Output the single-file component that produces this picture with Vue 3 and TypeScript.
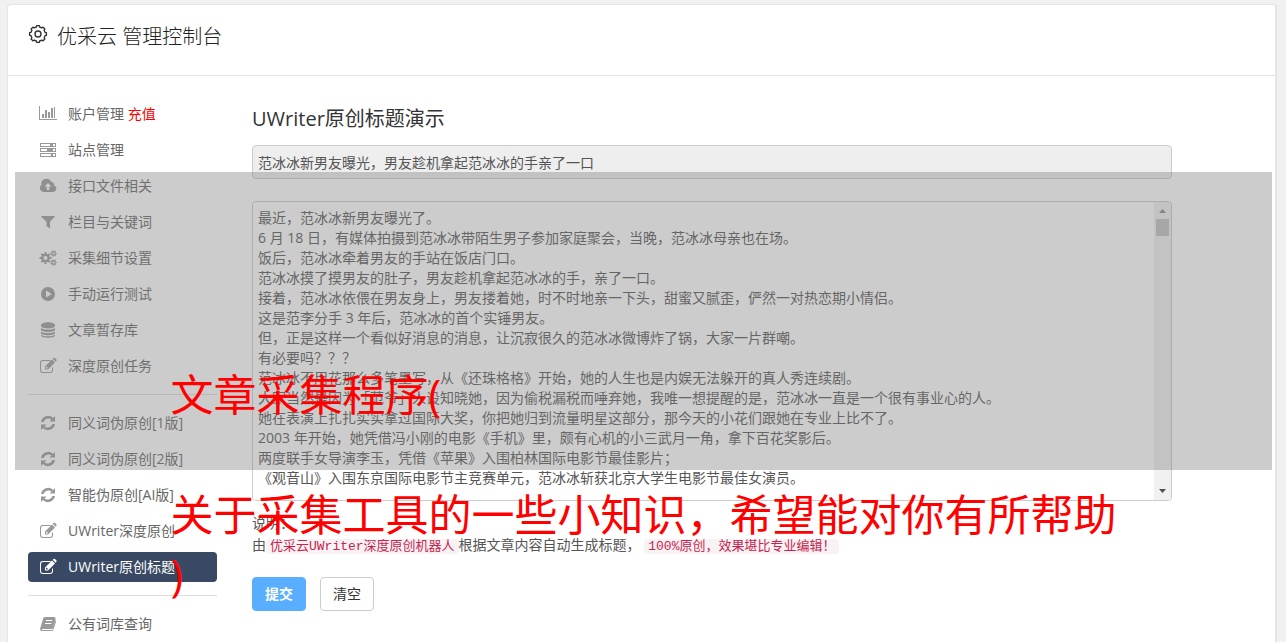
<script setup lang="ts">
import { ref } from 'vue'

interface Item { icon: string; label: string; extra?: string; active?: boolean }

const groups: Item[][] = [
  [
    { icon: 'chart', label: '账户管理', extra: '充值' },
    { icon: 'server', label: '站点管理' },
    { icon: 'cloud', label: '接口文件相关' },
    { icon: 'filter', label: '栏目与关键词' },
    { icon: 'cogs', label: '采集细节设置' },
    { icon: 'play', label: '手动运行测试' },
    { icon: 'database', label: '文章暂存库' },
    { icon: 'edit', label: '深度原创任务' },
  ],
  [
    { icon: 'refresh', label: '同义词伪原创[1版]' },
    { icon: 'refresh', label: '同义词伪原创[2版]' },
    { icon: 'refresh', label: '智能伪原创[AI版]' },
    { icon: 'edit', label: 'UWriter深度原创' },
    { icon: 'edit', label: 'UWriter原创标题', active: true },
  ],
  [{ icon: 'book', label: '公有词库查询' }],
]

const gear = (cx: number, cy: number, outer: number, inner: number, hole: number, teeth: number): string => {
  const points: string[] = []
  const step = (Math.PI * 2) / teeth
  for (let i = 0; i < teeth; i++) {
    const shape: [number, number][] = [[-0.3, inner], [-0.2, outer], [0.2, outer], [0.3, inner]]
    for (const [offset, radius] of shape) {
      const a = (i + offset) * step
      points.push(`${(cx + Math.cos(a) * radius).toFixed(2)} ${(cy + Math.sin(a) * radius).toFixed(2)}`)
    }
  }
  return `M${points.join('L')}ZM${cx - hole} ${cy}a${hole} ${hole} 0 1 0 ${hole * 2} 0a${hole} ${hole} 0 1 0 ${-hole * 2} 0Z`
}

const icons: Record<string, string> = {
  chart: 'M0 1h1v13h17v1H0ZM3 9h2v4H3ZM6 5h2v8H6ZM9 7h2v6H9ZM12 3h2v10h-2ZM15 2h1v11h-1Z',
  server: 'M1 2h16v4H1ZM2 3v2h9V3ZM14 3v2h2V3ZM1 7h16v4H1ZM2 8v2h6V8ZM14 8v2h2V8ZM1 12h16v4H1ZM2 13v2h10v-2ZM14 13v2h2v-2Z',
  cloud: 'M4.5 15A4 4 0 0 1 2.500 7.700A5 5 0 0 1 12 4.800A3 3 0 0 1 15 8.400A3.400 3.400 0 0 1 14.300 15ZM9 6L5.500 9.600h2.300V13h2.400V9.600h2.300Z',
  filter: 'M2.500 3h13q.6.5 0 1.100L11 8.800V15.500L7.500 13V8.800L2.500 4.100q-.6-.6 0-1.100Z',
  cogs: gear(6.5, 9, 6, 4.4, 2, 8) + gear(14.5, 4.5, 3.3, 2.3, 1.1, 7) + gear(14.5, 13.5, 3.3, 2.3, 1.1, 7),
  play: 'M9 2a7 7 0 1 0 0 14a7 7 0 1 0 0-14ZM7 5.500L12.700 9L7 12.500Z',
  database: 'M2 4.200C2 .2 16 .2 16 4.200V5C16 8.200 2 8.200 2 5ZM2 7C5 9 13 9 16 7V8.700C16 11.600 2 11.600 2 8.700ZM2 10.500C5 12.500 13 12.500 16 10.500V12C16 15 2 15 2 12ZM2 13.800C5 15.800 13 15.800 16 13.800V14.600C16 17.600 2 17.600 2 14.600Z',
  edit: 'M3.500 3H12L11 4H4Q2 4 2 6V13Q2 15 4 15H11Q13 15 13 13V11L14 10V13Q14 16 11 16H4Q1 16 1 13V6Q1 3 3.500 3ZM6 9.500L13 2.500L16 5.500L9 12.500H6ZM7 10V11.500H8.500L9 11L7.500 9.500ZM13.700 1.800L14.500 1Q15.200.4 16 1L17.300 2.300Q18 3 17.300 3.900L16.600 4.700Z',
  refresh: 'M2 8A7.200 7.200 0 0 1 14.100 3.900L16 2V7.500H10.500L12.500 5.500A5 5 0 0 0 4.600 8ZM16 10A7.200 7.200 0 0 1 3.900 14.100L2 16V10.500H7.500L5.500 12.500A5 5 0 0 0 13.400 10Z',
  book: 'M6 2H15Q17 2 16.500 4L14 13Q13.500 14 12 14H3.500Q2.500 14 3 15H13.500L16.500 5Q17.500 6 17 7L14.300 15Q14 16 12.500 16H3Q1 16 1 14L4 4Q4.500 2 6 2ZM7 5L6.700 6H13L13.300 5ZM6.200 8L5.900 9H12.200L12.500 8Z',
}

const title = ref('范冰冰新男友曝光，男友趁机拿起范冰冰的手亲了一口')
const article = ref([
  '最近，范冰冰新男友曝光了。',
  '6 月 18 日，有媒体拍摄到范冰冰带陌生男子参加家庭聚会，当晚，范冰冰母亲也在场。',
  '饭后，范冰冰牵着男友的手站在饭店门口。',
  '范冰冰摸了摸男友的肚子，男友趁机拿起范冰冰的手，亲了一口。',
  '接着，范冰冰依偎在男友身上，男友搂着她，时不时地亲一下头，甜蜜又腻歪，俨然一对热恋期小情侣。',
  '这是范李分手 3 年后，范冰冰的首个实锤男友。',
  '但，正是这样一个看似好消息的消息，让沉寂很久的范冰冰微博炸了锅，大家一片群嘲。',
  '有必要吗？？？',
  '范冰冰不用花那么多笔墨写，从《还珠格格》开始，她的人生也是内娱无法躲开的真人秀连续剧。',
  '大家当然是因为「范爷」人设知晓她，因为偷税漏税而唾弃她，我唯一想提醒的是，范冰冰一直是一个很有事业心的人。',
  '她在表演上扎扎实实拿过国际大奖，你把她归到流量明星这部分，那今天的小花们跟她在专业上比不了。',
  '2003 年开始，她凭借冯小刚的电影《手机》里，颇有心机的小三武月一角，拿下百花奖影后。',
  '两度联手女导演李玉，凭借《苹果》入围柏林国际电影节最佳影片；',
  '《观音山》入围东京国际电影节主竞赛单元，范冰冰斩获北京大学生电影节最佳女演员。',
].join('\n'))

const clearForm = () => {
  title.value = ''
  article.value = ''
}
</script>

<template>
  <div class="page">
    <div class="panel">
      <header class="header">
        <svg class="logo" viewBox="0 0 20 20" aria-hidden="true">
          <path :d="gear(10, 10, 8.5, 7.2, 3, 8)" />
        </svg>
        <h1>优采云 管理控制台</h1>
      </header>
      <div class="body">
        <nav class="side">
          <ul v-for="(group, g) in groups" :key="g">
            <li v-for="item in group" :key="item.label">
              <a href="#" :class="{ active: item.active }">
                <svg viewBox="0 0 18 18" aria-hidden="true"><path :d="icons[item.icon]" /></svg>
                <span>{{ item.label }} <em v-if="item.extra">{{ item.extra }}</em></span>
              </a>
            </li>
          </ul>
        </nav>
        <form class="main" @submit.prevent>
          <h2>UWriter原创标题演示</h2>
          <input v-model="title" class="title" type="text" readonly aria-label="标题">
          <div class="editor">
            <textarea v-model="article" aria-label="文章内容" spellcheck="false" wrap="off"></textarea>
            <div class="track" aria-hidden="true">
              <svg viewBox="0 0 7 4"><path d="M0 4L3.500 0L7 4Z" /></svg>
              <i></i>
              <svg class="down" viewBox="0 0 7 4"><path d="M0 0H7L3.500 4Z" /></svg>
            </div>
          </div>
          <div class="note">
            <p>说明：</p>
            <p>由<code>优采云UWriter深度原创机器人</code>根据文章内容自动生成标题， <code>100%原创，效果堪比专业编辑！</code></p>
          </div>
          <div class="actions">
            <button class="primary" type="submit">提交</button>
            <button type="button" @click="clearForm">清空</button>
          </div>
        </form>
      </div>
    </div>
    <div class="banner">
      <p>文章采集程序(<br><br>关于采集工具的一些小知识，希望能对你有所帮助<br>)</p>
    </div>
  </div>
</template>

<style>
body { margin: 0; background: #f1f1f1; }
</style>

<style scoped>
* { box-sizing: border-box; }
.page {
  position: relative;
  height: 100vh;
  overflow: hidden;
  padding: 4px 9px 0 7px;
  font: 14px/20px "Open Sans", "Noto Sans CJK SC", sans-serif;
  color: #555;
}
.panel {
  min-height: 100%;
  background: #fff;
  border: 1px solid #e5e5e5;
  border-right-width: 2px;
  border-bottom: 0;
  border-radius: 4px 4px 0 0;
}
.header {
  display: flex;
  align-items: flex-start;
  gap: 9px;
  height: 71px;
  padding: 17px 20px;
  border-bottom: 1px solid #e5e5e5;
}
.logo { width: 20px; height: 20px; margin-top: 2px; }
.logo path { fill: none; stroke: #333; stroke-width: 1.4; stroke-linejoin: round; }
h1, h2 { margin: 0; font-size: 20px; font-weight: 300; line-height: 30px; color: #222; }
h2 { font-weight: 400; color: #333; }
.body { display: flex; gap: 35px; padding: 23px 103px 0 20px; }
.side { flex: 0 0 189px; }
ul { list-style: none; margin: 0; padding: 0; display: flex; flex-direction: column; gap: 6px; }
ul + ul { margin-top: 13px; padding-top: 13px; border-top: 1px solid #ddd; }
.side a {
  display: flex;
  align-items: center;
  gap: 11px;
  height: 30px;
  padding-left: 11px;
  border-radius: 4px;
  color: #666;
  text-decoration: none;
  white-space: nowrap;
}
.side svg { width: 18px; height: 18px; fill: #999; fill-rule: evenodd; }
.side em { font-style: normal; color: #f00; }
.side a.active { background: #394963; color: #fff; }
.side a.active svg { fill: #fff; }
.main { flex: 1; min-width: 0; padding-top: 5px; }
.title {
  display: block;
  width: 100%;
  height: 34px;
  margin: 11px 0 22px;
  padding: 0 5px 1px;
  border: 1px solid #ccc;
  border-radius: 4px;
  background: #eee;
  font: inherit;
  color: #555;
}
.editor { display: flex; height: 300px; border: 1px solid #ccc; border-radius: 4px; overflow: hidden; }
textarea {
  flex: 1;
  min-width: 0;
  padding: 6px 5px;
  border: 0;
  outline: 0;
  resize: none;
  overflow: auto;
  scrollbar-width: none;
  background: #fff;
  font: inherit;
  color: #555;
}
.track {
  display: flex;
  flex-direction: column;
  align-items: center;
  width: 17px;
  padding: 7px 0;
  background: #f1f1f1;
}
.track svg { width: 7px; height: 4px; fill: #505050; }
.track svg:first-child { fill: #888; }
.track i { width: 13px; height: 17px; margin-top: 6px; background: #c1c1c1; }
.track .down { margin-top: auto; }
.note { margin-top: 11px; }
p { margin: 0; }
.note p { height: 22px; line-height: 22px; white-space: nowrap; }
code {
  padding: 0 4px;
  border-radius: 4px;
  background: #f9f2f4;
  color: #c7254e;
  font: 13px/18px "Liberation Mono", "Noto Sans CJK SC", monospace;
}
.actions { display: flex; gap: 14px; margin-top: 21px; }
button {
  width: 54px;
  height: 34px;
  padding: 0;
  border: 1px solid #ccc;
  border-radius: 4px;
  background: #fff;
  color: #333;
  font: inherit;
}
.primary { border-color: #5aaeff; background: #5aaeff; color: #fff; font-weight: 700; }
.banner {
  position: absolute;
  top: 172px;
  left: 15px;
  right: 14px;
  height: 298px;
  display: flex;
  justify-content: center;
  padding-top: 193px;
  background: rgba(128, 128, 128, 0.4);
  pointer-events: none;
}
.banner p { font-size: 43px; line-height: 60px; color: #f00; white-space: nowrap; }
</style>
